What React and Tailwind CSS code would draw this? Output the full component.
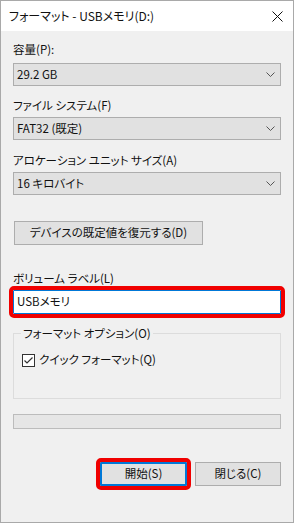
import React from "react";

// Chevron for the combo boxes
const Chevron = () => (
  <svg width="9" height="5" viewBox="0 0 9 5" className="shrink-0">
    <path d="M0.5 0.5 L4.5 4.5 L8.5 0.5" fill="none" stroke="#555" strokeWidth="1" />
  </svg>
);

// Combo box (drop-down list)
const Select = ({ value }) => (
  <div className="mt-[4px] h-[23px] border border-[#adadad] bg-[#e1e1e1] flex items-center justify-between pl-[3px] pr-[5px]">
    <span>{value}</span>
    <Chevron />
  </div>
);

const Label = ({ children, className = "" }) => (
  <div className={"h-[16px] leading-[16px] " + className}>{children}</div>
);

export default function App() {
  return (
    <div className="w-[294px] h-[523px] border border-[#a9a9a9] bg-[#f0f0f0] text-[11.5px] text-[#111] flex flex-col [font-family:'Noto_Sans_CJK_JP','Noto_Sans',sans-serif] [font-feature-settings:'palt']">
      {/* title bar */}
      <div className="h-[30px] bg-white flex items-center justify-between pl-[8px] pr-[10px] shrink-0 text-[12px]">
        <span>フォーマット - USBメモリ(D:)</span>
        <svg width="11" height="11" viewBox="0 0 11 11">
          <path d="M0.5 0.5 L10.5 10.5 M10.5 0.5 L0.5 10.5" stroke="#111" strokeWidth="1" />
        </svg>
      </div>

      {/* dialog body */}
      <div className="flex flex-col px-[12px] pt-[10px]">
        <Label>容量(P):</Label>
        <div className="mt-[2px]">
          <Select value="29.2 GB" />
        </div>

        <Label className="mt-[11px]">ファイル システム(F)</Label>
        <Select value="FAT32 (既定)" />

        <Label className="mt-[12px]">アロケーション ユニット サイズ(A)</Label>
        <Select value="16 キロバイト" />

        <button className="mt-[26px] ml-[1px] w-[189px] h-[24px] border border-[#adadad] bg-[#e1e1e1] text-center">
          デバイスの既定値を復元する(D)
        </button>

        <Label className="mt-[25px]">ボリューム ラベル(L)</Label>
        <div className="mt-[4px] h-[24px] border border-[#0078d7] bg-white flex items-center pl-[3px] outline-[4px] outline-solid outline-[#f00000] rounded-[1px]">
          USBメモリ
        </div>

        {/* format options group */}
        <fieldset className="mt-[11px] border border-[#dcdcdc] px-[7px] pb-[30px]">
          <legend className="px-[2px] h-[16px] leading-[16px]">フォーマット オプション(O)</legend>
          <div className="mt-[11px] flex items-center h-[16px] gap-[4px]">
            <svg width="13" height="13" viewBox="0 0 13 13" className="shrink-0 ml-[1px]">
              <rect x="0.5" y="0.5" width="12" height="12" fill="white" stroke="#333" />
              <path d="M2.5 6.5 L5 9 L10.5 3.5" fill="none" stroke="#333" strokeWidth="1.2" />
            </svg>
            <span>クイック フォーマット(Q)</span>
          </div>
        </fieldset>

        {/* progress bar */}
        <div className="mt-[15px] h-[15px] border border-[#bcbcbc] bg-[#e6e6e6]" />

        {/* action buttons */}
        <div className="mt-[33px] flex justify-end gap-[8px]">
          <button className="w-[87px] h-[24px] border-2 border-[#0078d7] bg-[#e1e1e1] outline-[4px] outline-solid outline-[#f00000] rounded-[1px]">
            開始(S)
          </button>
          <button className="w-[86px] h-[24px] border border-[#adadad] bg-[#e1e1e1]">
            閉じる(C)
          </button>
        </div>
      </div>
    </div>
  );
}
